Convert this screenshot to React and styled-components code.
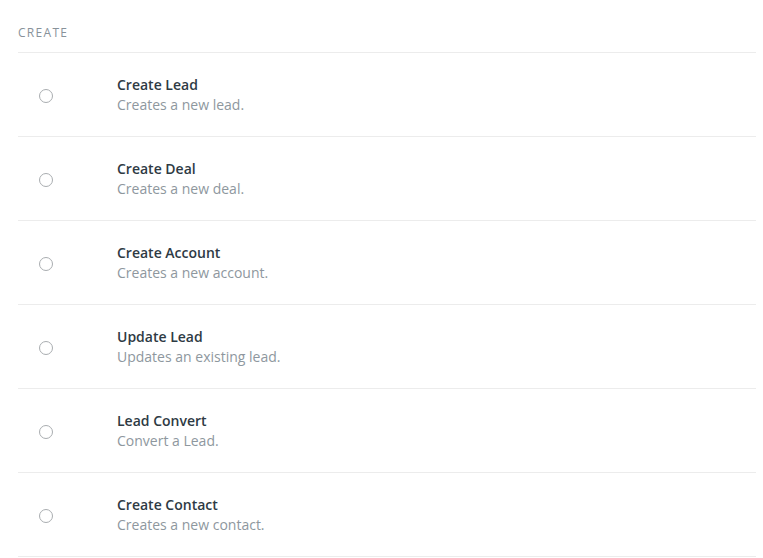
import React from "react";
import styled, { createGlobalStyle } from "styled-components";

const Global = createGlobalStyle`
  html, body { margin: 0; padding: 0; background: #ffffff; }
  body { font-family: "Open Sans", "Liberation Sans", sans-serif; -webkit-font-smoothing: antialiased; }
`;

const Page = styled.div`
  padding: 0 7px 0 18px;
  width: 763px;
  box-sizing: border-box;
`;

const SectionTitle = styled.div`
  font-size: 12px;
  letter-spacing: 1.3px;
  color: #88929a;
  text-transform: uppercase;
  line-height: 16px;
  padding: 25px 0 11px;
  border-bottom: 1px solid #ececec;
`;

const List = styled.ul`
  list-style: none;
  margin: 0;
  padding: 0;
`;

const Row = styled.li`
  display: flex;
  align-items: center;
  height: 84px;
  border-bottom: 1px solid #ececec;
  box-sizing: border-box;
  cursor: pointer;
`;

const RadioCell = styled.div`
  width: 99px;
  flex: none;
  display: flex;
  align-items: center;
  padding-left: 21px;
  padding-top: 3px;
  box-sizing: border-box;
`;

const Radio = styled.span`
  width: 14px;
  height: 14px;
  border-radius: 50%;
  border: 1px solid #a9adb0;
  box-sizing: border-box;
  background: #fff;
`;

const Text = styled.div`
  display: flex;
  flex-direction: column;
`;

const Title = styled.div`
  font-size: 14px;
  font-weight: 600;
  color: #2e3a44;
  line-height: 20px;
`;

const Desc = styled.div`
  font-size: 14px;
  color: #8e979e;
  line-height: 20px;
`;

const items = [
  ["Create Lead", "Creates a new lead."],
  ["Create Deal", "Creates a new deal."],
  ["Create Account", "Creates a new account."],
  ["Update Lead", "Updates an existing lead."],
  ["Lead Convert", "Convert a Lead."],
  ["Create Contact", "Creates a new contact."],
];

export default function App() {
  return (
    <>
      <Global />
      <Page>
        <SectionTitle>Create</SectionTitle>
        <List>
          {items.map(([t, d]) => (
            <Row key={t}>
              <RadioCell>
                <Radio />
              </RadioCell>
              <Text>
                <Title>{t}</Title>
                <Desc>{d}</Desc>
              </Text>
            </Row>
          ))}
        </List>
      </Page>
    </>
  );
}
